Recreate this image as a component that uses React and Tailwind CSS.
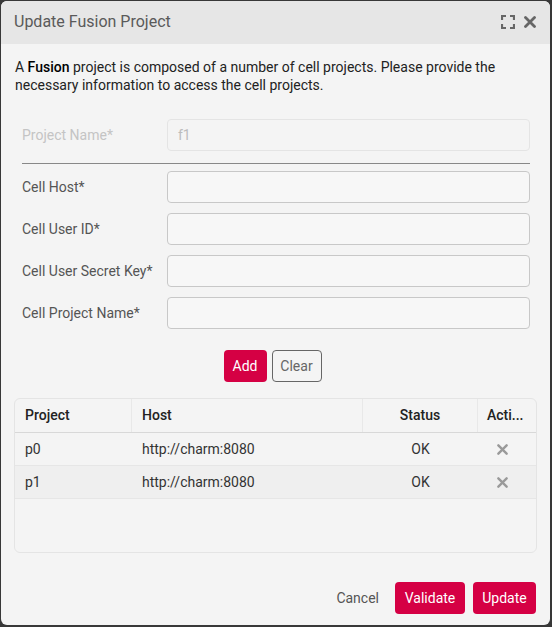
import React from "react";

const font = { fontFamily: "Roboto, 'Noto Sans', sans-serif" };

function FullscreenIcon() {
  return (
    <svg width="14" height="14" viewBox="0 0 14 14" fill="none" stroke="#666" strokeWidth="2.2">
      <path d="M1 5V1h4M9 1h4v4M13 9v4H9M5 13H1V9" />
    </svg>
  );
}

function CloseIcon({ size = 12, color = "#666", w = 2.8 }) {
  return (
    <svg width={size} height={size} viewBox="0 0 12 12" fill="none" stroke={color} strokeWidth={w} strokeLinecap="round">
      <path d="M1.5 1.5l9 9M10.5 1.5l-9 9" />
    </svg>
  );
}

function Field({ label, value, disabled }) {
  return (
    <div className="flex items-center h-8">
      <div className={`w-[145px] shrink-0 text-[14px] ${disabled ? "text-[#c4c4c4]" : "text-[#555]"}`}>{label}</div>
      <div
        className={`flex-1 h-8 rounded-[4px] border flex items-center px-[10px] text-[14px] ${
          disabled ? "border-[#e4e4e4] text-[#bcbcbc] bg-[#f4f4f4]" : "border-[#c8c8c8] bg-[#f7f7f7]"
        }`}
      >
        {value}
      </div>
    </div>
  );
}

export default function App() {
  const rows = [
    { p: "p0", h: "http://charm:8080", s: "OK" },
    { p: "p1", h: "http://charm:8080", s: "OK" },
  ];
  return (
    <div className="w-[552px] h-[627px] bg-[#383838] pt-px pl-px" style={font}>
      <div className="w-[549px] h-[624px] rounded-[6px] bg-[#f4f4f4] overflow-hidden flex flex-col">
        <div className="h-[43px] bg-[#e6e6e6] flex items-center pl-[13px] pr-[14px] pb-px shrink-0">
          <div className="flex-1 text-[16px] text-[#5a5a5a]">Update Fusion Project</div>
          <div className="flex items-center gap-[9px]">
            <FullscreenIcon />
            <CloseIcon />
          </div>
        </div>
        <div className="flex-1 flex flex-col">
          <p className="px-[14px] pt-[14px] text-[14px] leading-[18px] text-[#222]">
            A <span className="font-medium text-black">Fusion</span> project is composed of a number of cell projects. Please provide the necessary information to access the cell projects.
          </p>
          <div className="pl-[21px] pr-[20px] pt-[25px]">
            <Field label="Project Name*" value="f1" disabled />
            <div className="h-px bg-[#888] mt-[12px] mb-[7px]" />
            <div className="flex flex-col gap-[10px]">
              <Field label="Cell Host*" />
              <Field label="Cell User ID*" />
              <Field label="Cell User Secret Key*" />
              <Field label="Cell Project Name*" />
            </div>
          </div>
          <div className="flex justify-center gap-[5px] mt-[21px] pr-[6px]">
            <button className="h-8 w-[43px] rounded-[4px] bg-[#d50044] text-white text-[14px]">Add</button>
            <button className="h-8 w-[50px] rounded-[4px] border border-[#666] text-[#666] text-[14px]">Clear</button>
          </div>
          <div className="mx-[13px] mt-[16px] h-[155px] rounded-[6px] border border-[#e4e4e4] overflow-hidden text-[14px]">
            <div className="flex h-[34px] border-b border-[#d8d8d8] font-medium text-[#222]">
              <div className="w-[117px] pl-[10px] flex items-center border-r border-[#e8e8e8]">Project</div>
              <div className="w-[231px] pl-[10px] flex items-center border-r border-[#e8e8e8]">Host</div>
              <div className="w-[115px] flex items-center justify-center border-r border-[#e8e8e8]">Status</div>
              <div className="flex-1 pl-[9px] flex items-center">Acti...</div>
            </div>
            {rows.map((r, i) => (
              <div key={r.p} className={`flex h-[33px] border-b border-[#e6e6e6] text-[#333] ${i === 1 ? "bg-[#efefef]" : ""}`}>
                <div className="w-[117px] pl-[10px] flex items-center">{r.p}</div>
                <div className="w-[231px] pl-[10px] flex items-center">{r.h}</div>
                <div className="w-[115px] flex items-center justify-center">{r.s}</div>
                <div className="flex-1 flex items-center pl-[19px]">
                  <CloseIcon size={11} color="#9a9a9a" w={2.6} />
                </div>
              </div>
            ))}
          </div>
          <div className="flex-1" />
          <div className="flex items-center justify-end gap-[8px] pr-[14px] pb-[11px]">
            <span className="text-[14px] text-[#555] mr-[8px]">Cancel</span>
            <button className="h-8 w-[70px] rounded-[4px] bg-[#d50044] text-white text-[14px]">Validate</button>
            <button className="h-8 w-[63px] rounded-[4px] bg-[#d50044] text-white text-[14px]">Update</button>
          </div>
        </div>
      </div>
    </div>
  );
}
